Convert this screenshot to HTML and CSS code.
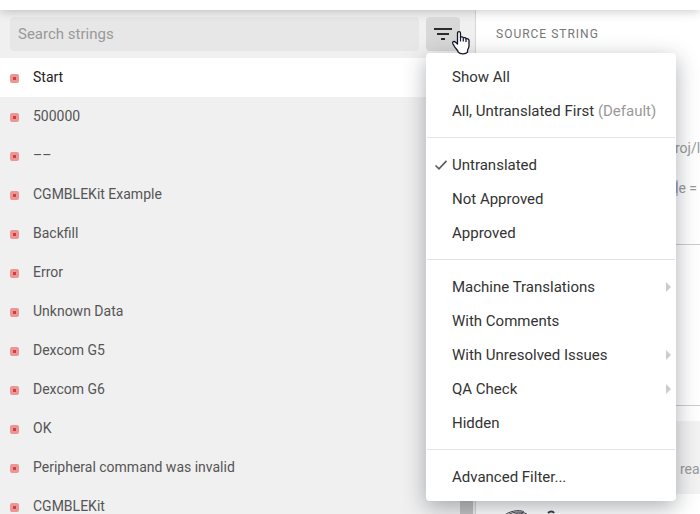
FILE: index.html
```html
<!DOCTYPE html>
<html lang="en">
<head>
<meta charset="utf-8">
<title>Strings</title>
<link rel="stylesheet" href="styles.css">
</head>
<body>
<header class="topbar"></header>
<main class="workspace">
  <section class="strings">
    <form class="search">
      <input class="search-box" type="search" placeholder="Search strings" aria-label="Search strings">
      <div class="filter">
        <button class="filter-button" type="button" aria-label="Filter">
          <svg width="18" height="12" viewBox="0 0 18 12" fill="#2b2b2b"><path d="M0 0h18v2H0zM3 5h12v2H3zM7 10h4v2H7z"/></svg>
        </button>
        <svg class="cursor" width="20" height="26" viewBox="0 0 20 26"><path d="M6.500 14V3.300C6.500 1 9.500 1 9.500 3.300V7.500c.5-.9 2.600-.7 2.800.5.800-.7 2.500-.3 2.700.9 1.100-.6 3 .1 3 1.600v5.500c0 2-1.500 3-1.500 5v1.200c-1.500 2.200-7.500 2.400-9.300 0 0-2-2.700-3.500-4.200-6.500L1.700 13.500c-.6-1.900 1.500-2.500 2.600-1.500z" fill="#fff" stroke="#15152b" stroke-width="1.300" stroke-linejoin="round"/><path d="M9.500 7v4.500M12.300 8.200v3.300M15 9v3" fill="none" stroke="#15152b" stroke-width="1.200"/></svg>
        <div class="menu" role="menu">
          <div class="menu-group">
            <button class="menu-item" type="button">Show All</button>
            <button class="menu-item" type="button">All, Untranslated First <span class="hint">(Default)</span></button>
          </div>
          <div class="menu-group">
            <button class="menu-item checked" type="button"><svg class="check" width="14" height="12" viewBox="0 0 14 12"><path d="M1.500 6.500 5 9.800 12.500 1.800" fill="none" stroke="#5c5c5c" stroke-width="1.700"/></svg>Untranslated</button>
            <button class="menu-item" type="button">Not Approved</button>
            <button class="menu-item" type="button">Approved</button>
          </div>
          <div class="menu-group">
            <button class="menu-item submenu" type="button">Machine Translations</button>
            <button class="menu-item" type="button">With Comments</button>
            <button class="menu-item submenu" type="button">With Unresolved Issues</button>
            <button class="menu-item submenu" type="button">QA Check</button>
            <button class="menu-item" type="button">Hidden</button>
          </div>
          <div class="menu-group">
            <button class="menu-item" type="button">Advanced Filter...</button>
          </div>
        </div>
      </div>
    </form>
    <ul class="list">
      <li class="row active"><i class="status"></i>Start</li>
      <li class="row"><i class="status"></i>500000</li>
      <li class="row"><i class="status"></i>––</li>
      <li class="row"><i class="status"></i>CGMBLEKit Example</li>
      <li class="row"><i class="status"></i>Backfill</li>
      <li class="row"><i class="status"></i>Error</li>
      <li class="row"><i class="status"></i>Unknown Data</li>
      <li class="row"><i class="status"></i>Dexcom G5</li>
      <li class="row"><i class="status"></i>Dexcom G6</li>
      <li class="row"><i class="status"></i>OK</li>
      <li class="row"><i class="status"></i>Peripheral command was invalid</li>
      <li class="row"><i class="status"></i>CGMBLEKit</li>
    </ul>
    <div class="scrollbar"></div>
  </section>
  <section class="source">
    <h2 class="source-title">SOURCE STRING</h2>
    <div class="context">
      <p class="context-line">roj/l</p>
      <p class="context-line"><mark class="mark">l</mark>e =</p>
    </div>
    <div class="translation"></div>
    <div class="suggestion">rea</div>
    <svg class="logo" width="70" height="30" viewBox="0 0 70 30" fill="none" stroke="#3c3c46"><path d="M2 7C8 1 20-1 24 2M8 5C13 1 24 1 28 5M11 7C15 2 22 2 26 6" stroke-width="1"/><path d="M48 3c2-2 5-2 6 0" stroke-width="2"/></svg>
  </section>
</main>
</body>
</html>
```
FILE: styles.css
```css
* { box-sizing: border-box; }

body {
  display: flex;
  flex-direction: column;
  height: 100vh;
  margin: 0;
  overflow: hidden;
  background: #fff;
  color: #333;
  font: 14px/20px Roboto, sans-serif;
}

button, input { font: inherit; border: 0; }

.topbar {
  flex: none;
  height: 10px;
  background: #fff;
  box-shadow: 0 0 12px rgba(0, 0, 0, 0.28);
  position: relative;
  z-index: 1;
}

.workspace {
  display: flex;
  flex: 1;
  min-height: 0;
}

.strings {
  position: relative;
  flex: 0 0 68%;
  background: #f0f0f0;
  border-right: 1px solid #d6d6d6;
}

.search {
  display: flex;
  gap: 7px;
  margin: 0;
  padding: 7px 15px 7px 10px;
}

.search-box {
  flex: 1;
  min-width: 0;
  height: 34px;
  padding: 0 8px;
  border-radius: 4px;
  background: #e7e7e7;
  font-size: 15px;
  appearance: none;
}

.search-box::placeholder { color: #999; }

.filter { position: relative; z-index: 2; }

.filter-button {
  display: flex;
  align-items: center;
  justify-content: center;
  width: 34px;
  height: 34px;
  padding: 0;
  border-radius: 4px;
  background: #d8d8d8;
}

.cursor {
  position: absolute;
  z-index: 2;
  top: 13px;
  left: 25px;
}

.menu {
  position: absolute;
  top: 36px;
  left: 0;
  width: 250px;
  padding: 7px 1px;
  border-radius: 4px;
  background: #fff;
  box-shadow: 0 6px 22px rgba(30, 36, 48, 0.36);
}

.menu-group + .menu-group {
  margin-top: 9px;
  padding-top: 10px;
  border-top: 1px solid #e3e3e3;
}

.menu-item {
  position: relative;
  display: block;
  width: 100%;
  height: 34px;
  padding: 0 25px;
  background: none;
  color: #333;
  font-size: 15px;
  text-align: left;
  white-space: nowrap;
}

.hint { color: #999; }

.check {
  position: absolute;
  top: 11px;
  left: 7px;
}

.submenu::after {
  content: "";
  position: absolute;
  top: 12px;
  right: 4px;
  border: 5px solid transparent;
  border-right: 0;
  border-left-color: #ccc;
}

.list {
  margin: 0;
  padding: 0;
  list-style: none;
}

.row {
  display: flex;
  align-items: center;
  gap: 14px;
  height: 39px;
  padding: 0 10px 2px;
  color: #555;
}

.active { background: #fff; color: #222; }

.status {
  width: 9px;
  height: 9px;
  margin-top: 4px;
  border: 3px solid #ec9595;
  border-radius: 2px;
  background: #cf3f3f;
}

.scrollbar {
  position: absolute;
  top: 58px;
  right: 2px;
  bottom: 0;
  width: 13px;
  background: #c1c1c1;
}

.list { position: relative; z-index: 1; }

.row { margin-right: 15px; }

.source {
  flex: 1;
  min-width: 0;
  overflow: hidden;
}

.source-title {
  margin: 14px 20px 0;
  color: #777;
  font-size: 12px;
  font-weight: 400;
  letter-spacing: 1px;
}

.context {
  display: grid;
  align-content: start;
  gap: 20px;
  height: 201px;
  padding: 94px 0 0 199px;
  border-bottom: 1px solid #ccc;
  color: #999;
}

.context-line { margin: 0; white-space: nowrap; }

.mark { background: #b4d3f5; color: inherit; }

.translation {
  height: 161px;
  margin-bottom: 15px;
  border-bottom: 1px solid #ccc;
}

.suggestion {
  height: 73px;
  padding: 38px 0 0 204px;
  background: #f3f3f3;
  color: #999;
}

.logo { display: block; margin: 16px 0 0 24px; }
```
